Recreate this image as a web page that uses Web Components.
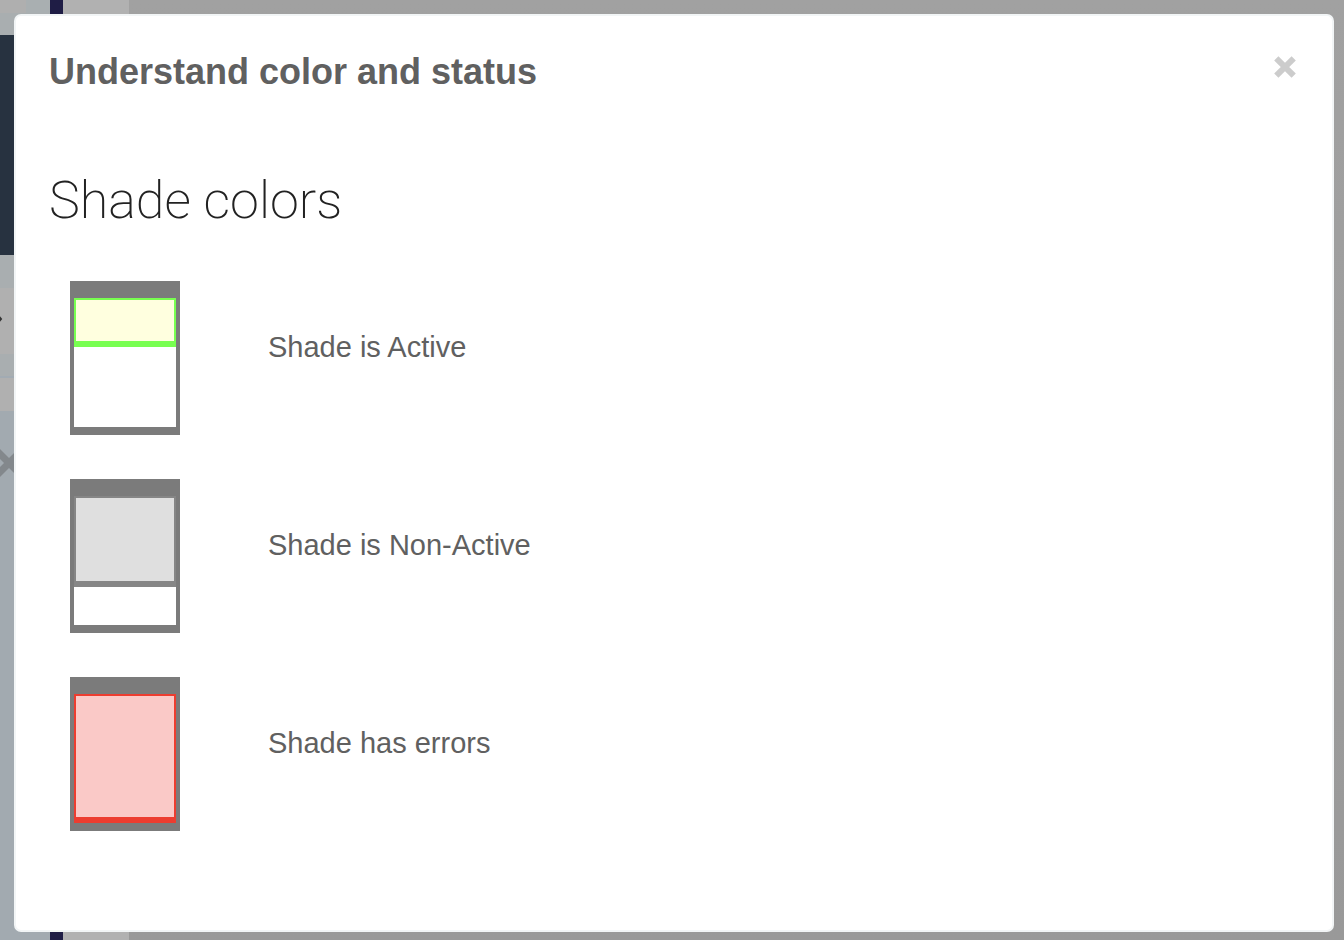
<!DOCTYPE html>
<html lang="en">
<head>
<meta charset="utf-8">
<meta name="viewport" content="width=device-width, initial-scale=1">
<title>Understand color and status</title>
<style>
html, body { margin: 0; height: 100%; }
body { font-family: "Liberation Sans", Arial, sans-serif; color: #606060; overflow: hidden; }
</style>
</head>
<body>
<shade-app>
  <page-backdrop></page-backdrop>
  <info-dialog>
    <span slot="title">Understand color and status</span>
    <color-legend>
      <span slot="heading">Shade colors</span>
      <shade-row state="active">Shade is Active</shade-row>
      <shade-row state="inactive">Shade is Non-Active</shade-row>
      <shade-row state="error">Shade has errors</shade-row>
    </color-legend>
  </info-dialog>
</shade-app>
<script>
function define(name, html) {
  const template = document.createElement("template");
  template.innerHTML = html;
  customElements.define(name, class extends HTMLElement {
    constructor() {
      super();
      this.attachShadow({ mode: "open" }).append(template.content.cloneNode(true));
    }
  });
}

define("shade-app", `
<style>
:host { display: block; position: relative; min-height: 100%; height: 100%; }
</style>
<slot></slot>`);

/* The dimmed page that shows round the edges of the dialog */
define("page-backdrop", `
<style>
:host { display: grid; grid-template-columns: 50px 13px 66px 1fr; height: 100%; background: #b1b1b1; }
.side { display: flex; flex-direction: column; background: #a2aab0; }
.side > div { flex: none; }
.top { display: flex; height: 13px; background: #a9afb1; }
.top::before { content: ""; width: 26px; background: #afafaf; }
.pale { height: 22px; background: #a9aeb0; }
.head { height: 220px; background: #273240; }
.band { height: 33px; background: #a9aeb0; }
.item { height: 66px; background: #b0b0b0; }
.rule { height: 2px; background: #a2abb3; }
.entry { height: 33px; background: #b0b0b0; }
.item svg { display: block; margin-top: 26px; }
.item { display: flow-root; }
.cross { padding-top: 38px; }
.cross svg { display: block; }
.bar { background: #1f1d45; }
.main { background: linear-gradient(#a1a1a1, #999); }
</style>
<div class="side">
  <div class="top"></div><div class="pale"></div><div class="head"></div><div class="band"></div>
  <div class="item"><svg width="4" height="10" viewBox="0 0 4 10"><path d="M-3 0L1 5L-3 10" fill="none" stroke="#333" stroke-width="2"/></svg></div>
  <div class="pale"></div><div class="rule"></div><div class="entry"></div>
  <div class="cross"><svg width="22" height="28" viewBox="0 0 22 28"><path d="M-3 2L21 26M21 2L-3 26" stroke="#83888c" stroke-width="7"/></svg></div>
</div>
<div class="bar"></div><div></div><div class="main"></div>`);

define("info-dialog", `
<style>
:host { position: absolute; inset: 14px 10px 8px 14px; box-sizing: border-box; display: flex; flex-direction: column;
  background: #fff; border: 2px solid #f2f5f6; border-radius: 7px; padding: 33px; }
header { display: flex; justify-content: space-between; align-items: flex-start; }
h1 { margin: 0; padding-top: 2px; font-size: 36px; line-height: 42px; font-weight: 700; }
button { margin: 0; padding: 7px 3px; border: 0; background: none; line-height: 0; cursor: pointer; }
</style>
<header>
  <h1><slot name="title"></slot></h1>
  <button type="button" aria-label="Close"><svg width="22" height="22" viewBox="0 0 22 22"><path d="M2.3 2.3L19.7 19.7M19.7 2.3L2.3 19.7" stroke="#ccc" stroke-width="6"/></svg></button>
</header>
<slot></slot>`);

define("color-legend", `
<style>
:host { display: block; padding-top: 76px; }
h2 { margin: 0 0 48px; font: 200 52px/64px Roboto, "Liberation Sans", sans-serif; color: #222; }
.rows { display: flex; flex-direction: column; gap: 44px; padding-left: 21px; }
</style>
<h2><slot name="heading"></slot></h2>
<div class="rows"><slot></slot></div>`);

define("shade-row", `
<style>
:host { display: flex; align-items: center; gap: 88px; --edge: #868686; --fill: #dfdfdf; --drop: 91px; }
:host([state=active]) { --edge: #78ff50; --fill: #ffffdf; --drop: 49px; }
:host([state=error]) { --edge: #ec3d30; --fill: #fac9c7; --drop: 129px; }
.window { flex: none; box-sizing: border-box; width: 110px; height: 154px; background: #fff;
  border: solid #7b7b7b; border-width: 17px 4px 8px; }
.shade { box-sizing: border-box; height: var(--drop); background: var(--fill);
  border: 2px solid var(--edge); border-bottom-width: 6px; }
.label { font-size: 29px; line-height: 34px; padding-bottom: 22px; }
</style>
<div class="window"><div class="shade"></div></div>
<span class="label"><slot></slot></span>`);
</script>
</body>
</html>
